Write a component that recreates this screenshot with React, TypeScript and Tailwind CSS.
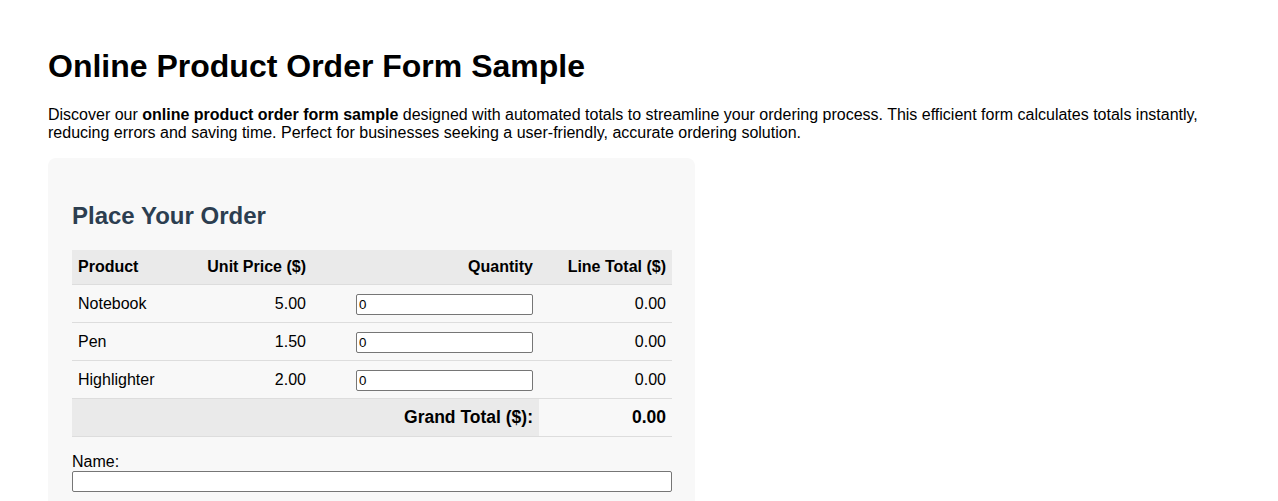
import React, { useState } from "react";

const products = [
  { name: "Notebook", price: 5 },
  { name: "Pen", price: 1.5 },
  { name: "Highlighter", price: 2 },
];

export default function App() {
  const [qty, setQty] = useState<string[]>(["0", "0", "0"]);

  const lineTotal = (i: number) => {
    const q = parseFloat(qty[i]) || 0;
    return q * products[i].price;
  };
  const grand = products.reduce((sum, _, i) => sum + lineTotal(i), 0);

  return (
    <div className="min-h-screen bg-white p-12 text-black font-['Liberation_Sans',Arial,sans-serif]">
      <h1 className="mb-[21px] text-[32px] font-bold leading-[37px]">Online Product Order Form Sample</h1>
      <p className="mb-4 text-base leading-[18px]">
        Discover our <strong className="font-bold">online product order form sample</strong> designed with
        automated totals to streamline your ordering process. This efficient form calculates totals instantly,
        reducing errors and saving time. Perfect for businesses seeking a user-friendly, accurate ordering solution.
      </p>

      <div className="w-[647px] rounded-lg bg-[#f8f8f8] p-6">
        <h2 className="my-5 text-2xl font-bold leading-[28px] text-[#2c3e50]">Place Your Order</h2>

        <table className="w-[600px] table-fixed border-collapse text-base">
          <colgroup>
            <col className="w-[128px]" />
            <col className="w-[112px]" />
            <col className="w-[227px]" />
            <col className="w-[133px]" />
          </colgroup>
          <thead>
            <tr className="border-b border-[#dddddd] bg-[#eaeaea]">
              <th className="px-1.5 py-2 text-left font-bold leading-[18px]">Product</th>
              <th className="px-1.5 py-2 text-right font-bold leading-[18px]">Unit Price ($)</th>
              <th className="px-1.5 py-2 text-right font-bold leading-[18px]">Quantity</th>
              <th className="px-1.5 py-2 text-right font-bold leading-[18px]">Line Total ($)</th>
            </tr>
          </thead>
          <tbody>
            {products.map((p, i) => (
              <tr key={p.name} className="h-[38px] border-b border-[#dddddd]">
                <td className="px-1.5 text-left">{p.name}</td>
                <td className="px-1.5 text-right">{p.price.toFixed(2)}</td>
                <td className="px-1.5 text-right">
                  <input
                    type="number"
                    min={0}
                    value={qty[i]}
                    onChange={(e) => {
                      const next = [...qty];
                      next[i] = e.target.value;
                      setQty(next);
                    }}
                    className="h-[21px] w-[177px] rounded-[2px] border border-[#767676] bg-white px-[2px] text-[13.33px] leading-[15px] [appearance:textfield] [&::-webkit-inner-spin-button]:appearance-none [&::-webkit-outer-spin-button]:appearance-none"
                  />
                </td>
                <td className="px-1.5 text-right">{lineTotal(i).toFixed(2)}</td>
              </tr>
            ))}
            <tr className="h-[38px] border-b border-[#dddddd]">
              <td colSpan={3} className="bg-[#eaeaea] px-1.5 text-right text-[17.5px] font-bold">
                Grand Total ($):
              </td>
              <td className="px-1.5 text-right text-[17.5px] font-bold">{grand.toFixed(2)}</td>
            </tr>
          </tbody>
        </table>

        <label className="mt-4 block text-base leading-[18px]">Name:</label>
        <input type="text" className="block h-[21px] w-[600px] rounded-[2px] border border-[#767676] bg-white px-[2px] text-[13.33px]" />
      </div>
    </div>
  );
}
